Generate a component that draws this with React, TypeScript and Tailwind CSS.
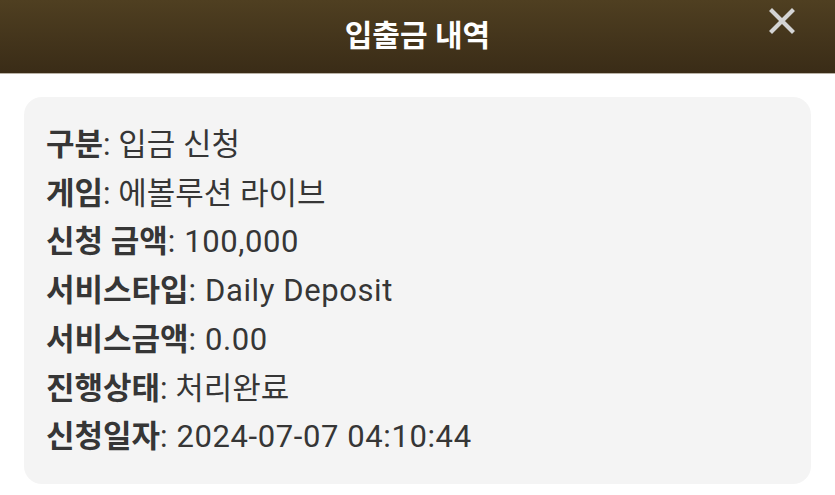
const rows: [string, string][] = [
  ["구분", "입금 신청"],
  ["게임", "에볼루션 라이브"],
  ["신청 금액", "100,000"],
  ["서비스타입", "Daily Deposit"],
  ["서비스금액", "0.00"],
  ["진행상태", "처리완료"],
  ["신청일자", "2024-07-07 04:10:44"],
];

export default function App() {
  return (
    <div
      className="w-[835px] h-[495px] bg-white overflow-hidden"
      style={{ fontFamily: 'Roboto, "Noto Sans CJK KR", sans-serif' }}
    >
      <header className="relative h-[74px] bg-gradient-to-b from-[#4f3f21] to-[#3a2c17] border-b border-[#b9b2a6] flex items-center justify-center">
        <h1 className="text-white text-[30px] font-bold leading-none -mt-[2px]">입출금 내역</h1>
        <button className="absolute right-[38px] top-[7px] w-[30px] h-[28px] flex items-center justify-center">
          <svg width="26" height="26" viewBox="0 0 26 26">
            <path d="M3 3L23 23M23 3L3 23" stroke="#d4d4d4" strokeWidth="4.2" strokeLinecap="square" />
          </svg>
        </button>
      </header>
      <div className="px-[24px] pt-[23px]">
        <div className="bg-[#f4f4f4] rounded-[18px] pl-[22px] pt-[24px] pb-[22px] h-[387px]">
          {rows.map(([label, value]) => {
            const latin = /^[\x00-\x7f]+$/.test(value);
            return (
              <div key={label} className="text-[31px] leading-[48.7px] text-[#363636] whitespace-nowrap">
                <span className="font-bold">{label}</span>
                <span className={latin ? "tracking-[0.6px]" : ""}>: {value}</span>
              </div>
            );
          })}
        </div>
      </div>
    </div>
  );
}
